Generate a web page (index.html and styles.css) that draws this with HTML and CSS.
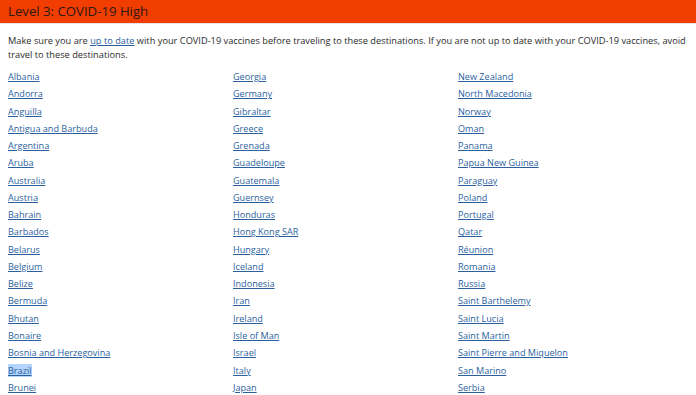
FILE: index.html
```html
<!DOCTYPE html>
<html lang="en">
<head>
<meta charset="utf-8">
<title>Level 3: COVID-19 High</title>
<link rel="stylesheet" href="styles.css">
</head>
<body>
<div class="banner"><h2 class="banner-title">Level 3: COVID-19 High</h2></div>
<div class="content">
<p class="intro">Make sure you are <a href="#">up to date</a> with your COVID-19 vaccines before traveling to these destinations. If you are not up to date with your COVID-19 vaccines, avoid travel to these destinations.</p>
<ul class="countries">
<li><a href="#">Albania</a></li>
<li><a href="#">Andorra</a></li>
<li><a href="#">Anguilla</a></li>
<li><a href="#">Antigua and Barbuda</a></li>
<li><a href="#">Argentina</a></li>
<li><a href="#">Aruba</a></li>
<li><a href="#">Australia</a></li>
<li><a href="#">Austria</a></li>
<li><a href="#">Bahrain</a></li>
<li><a href="#">Barbados</a></li>
<li><a href="#">Belarus</a></li>
<li><a href="#">Belgium</a></li>
<li><a href="#">Belize</a></li>
<li><a href="#">Bermuda</a></li>
<li><a href="#">Bhutan</a></li>
<li><a href="#">Bonaire</a></li>
<li><a href="#">Bosnia and Herzegovina</a></li>
<li><a href="#" class="selected">Brazil</a></li>
<li><a href="#">Brunei</a></li>
<li><a href="#">Georgia</a></li>
<li><a href="#">Germany</a></li>
<li><a href="#">Gibraltar</a></li>
<li><a href="#">Greece</a></li>
<li><a href="#">Grenada</a></li>
<li><a href="#">Guadeloupe</a></li>
<li><a href="#">Guatemala</a></li>
<li><a href="#">Guernsey</a></li>
<li><a href="#">Honduras</a></li>
<li><a href="#">Hong Kong SAR</a></li>
<li><a href="#">Hungary</a></li>
<li><a href="#">Iceland</a></li>
<li><a href="#">Indonesia</a></li>
<li><a href="#">Iran</a></li>
<li><a href="#">Ireland</a></li>
<li><a href="#">Isle of Man</a></li>
<li><a href="#">Israel</a></li>
<li><a href="#">Italy</a></li>
<li><a href="#">Japan</a></li>
<li><a href="#">New Zealand</a></li>
<li><a href="#">North Macedonia</a></li>
<li><a href="#">Norway</a></li>
<li><a href="#">Oman</a></li>
<li><a href="#">Panama</a></li>
<li><a href="#">Papua New Guinea</a></li>
<li><a href="#">Paraguay</a></li>
<li><a href="#">Poland</a></li>
<li><a href="#">Portugal</a></li>
<li><a href="#">Qatar</a></li>
<li><a href="#">Réunion</a></li>
<li><a href="#">Romania</a></li>
<li><a href="#">Russia</a></li>
<li><a href="#">Saint Barthelemy</a></li>
<li><a href="#">Saint Lucia</a></li>
<li><a href="#">Saint Martin</a></li>
<li><a href="#">Saint Pierre and Miquelon</a></li>
<li><a href="#">San Marino</a></li>
<li><a href="#">Serbia</a></li>
</ul>
</div>
</body>
</html>
```
FILE: styles.css
```css
html, body {
  margin: 0;
  padding: 0;
  background: #ffffff;
  font-family: "Open Sans", "Noto Sans", sans-serif;
  color: #222222;
  overflow: hidden;
}
.banner {
  background: #f23d00;
  border-bottom: 1px solid #e4e4e4;
  height: 23px;
  padding: 0 8px;
}
.banner-title {
  margin: 0;
  font-size: 13.2px;
  font-weight: 400;
  line-height: 23px;
  color: #2a1a14;
}
.content {
  padding: 0 8px;
}
.intro {
  margin: 10px 0 7px;
  font-size: 9.25px;
  line-height: 13.5px;
  color: #2b2b2b;
}
a {
  color: #2c5f9e;
  text-decoration: underline;
  text-underline-offset: 1px;
}
.countries {
  list-style: none;
  margin: 0;
  padding: 0;
  display: grid;
  grid-template-columns: 225px 225px 225px;
  grid-template-rows: repeat(19, 17.28px);
  grid-auto-flow: column;
  font-size: 9.1px;
  line-height: 17.28px;
}
.selected {
  background: #b3d4fc;
}
```
